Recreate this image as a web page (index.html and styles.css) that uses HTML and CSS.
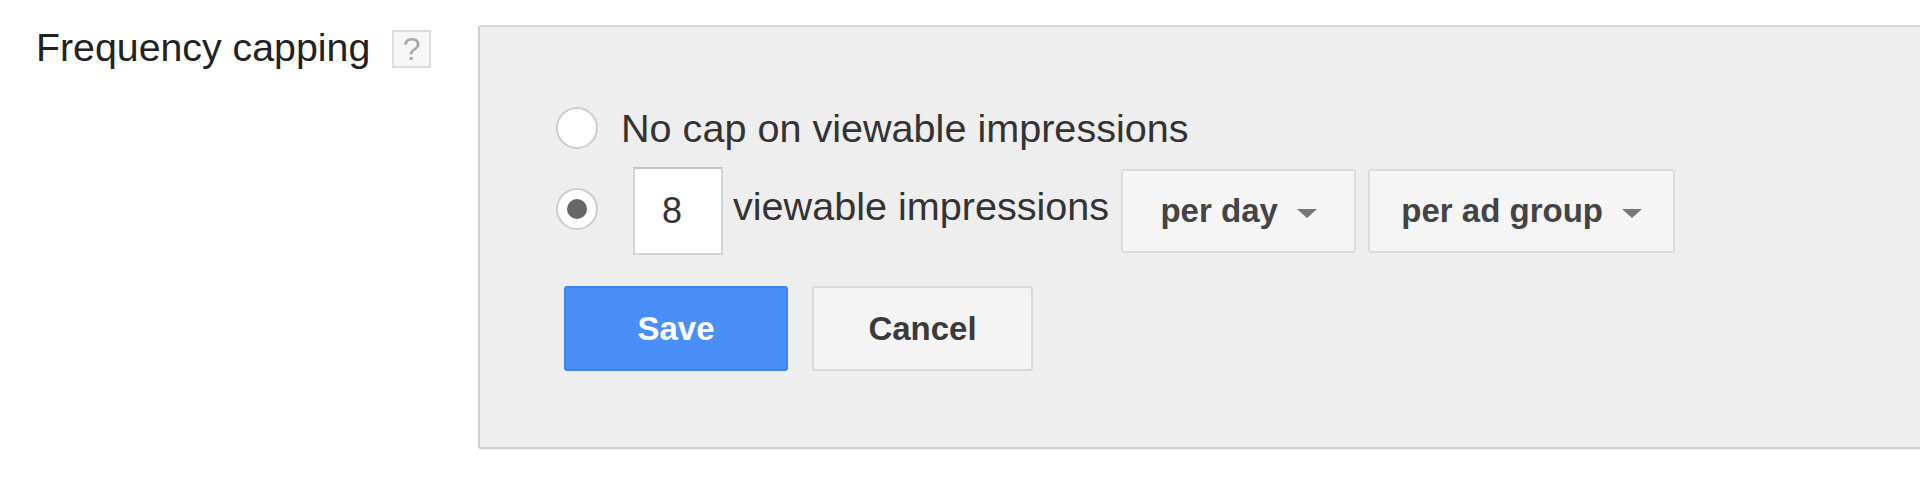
FILE: index.html
```html
<!DOCTYPE html>
<html lang="en">
<head>
<meta charset="utf-8">
<title>Frequency capping</title>
<link rel="stylesheet" href="styles.css">
</head>
<body>
<div class="setting">
  <div class="setting-label">
    <span class="label-text">Frequency capping</span>
    <span class="help">?</span>
  </div>
  <div class="panel">
    <div class="option">
      <span class="radio"></span>
      <span class="option-text">No cap on viewable impressions</span>
    </div>
    <div class="option option-cap">
      <span class="radio radio-checked"><span class="radio-dot"></span></span>
      <span class="num-input">8</span>
      <span class="option-text option-text-raised">viewable impressions</span>
      <span class="dropdown dropdown-day">per day<span class="caret"></span></span>
      <span class="dropdown dropdown-group">per ad group<span class="caret"></span></span>
    </div>
    <div class="actions">
      <span class="btn btn-primary">Save</span>
      <span class="btn btn-default">Cancel</span>
    </div>
  </div>
</div>
</body>
</html>
```

FILE: styles.css
```css
html, body {
  margin: 0;
  padding: 0;
  background: #ffffff;
  overflow: hidden;
}

body {
  font-family: "Liberation Sans", Arial, sans-serif;
  color: #222222;
  height: 495px;
}

.setting {
  display: flex;
  align-items: flex-start;
  padding-top: 25px;
}

.setting-label {
  box-sizing: border-box;
  width: 478px;
  flex-shrink: 0;
  padding-left: 36px;
  display: flex;
  align-items: center;
  font-size: 39.3px;
  line-height: 45px;
  color: #222222;
}

.help {
  box-sizing: border-box;
  width: 39px;
  height: 38px;
  margin-left: 22px;
  margin-top: 3px;
  border: 2px solid #dddddd;
  background: #f6f6f6;
  color: #a8a8a8;
  font-size: 32px;
  font-weight: normal;
  line-height: 34px;
  text-align: center;
}

.panel {
  flex: 1;
  margin-right: -20px;
  height: 424px;
  box-sizing: border-box;
  background: #eeeeee;
  border: 2px solid #cfcfcf;
  border-top-color: #d6d6d6;
  border-radius: 3px 0 0 3px;
  box-shadow: 0 1px 1px rgba(0, 0, 0, 0.06);
  padding: 79px 0 0 76px;
}

.option {
  display: flex;
  align-items: center;
  height: 44px;
}

.option-cap {
  height: 88px;
  margin-top: 17px;
}

.radio {
  box-sizing: border-box;
  width: 42px;
  height: 42px;
  flex-shrink: 0;
  border-radius: 50%;
  border: 2px solid #cdcdcd;
  background: #ffffff;
  display: flex;
  align-items: center;
  justify-content: center;
}

.radio-checked {
  margin-top: -4px;
}

.radio-dot {
  width: 20px;
  height: 20px;
  border-radius: 50%;
  background: #666666;
}

.option-text {
  font-size: 39.6px;
  color: #333333;
  margin-left: 23px;
  white-space: nowrap;
}

.option-text-raised {
  margin-left: 10px;
  margin-bottom: 10px;
}

.num-input {
  box-sizing: border-box;
  width: 90px;
  height: 88px;
  margin-left: 35px;
  padding-left: 27px;
  background: #ffffff;
  border: 2px solid #d4d4d4;
  border-top-color: #c4c4c4;
  font-size: 36px;
  line-height: 84px;
  text-align: left;
  color: #333333;
}

.dropdown {
  box-sizing: border-box;
  height: 84px;
  margin-left: 12px;
  display: flex;
  align-items: center;
  justify-content: center;
  background: #f5f5f5;
  border: 2px solid #dcdcdc;
  border-radius: 3px;
  font-size: 33px;
  font-weight: bold;
  color: #444444;
  white-space: nowrap;
}

.dropdown-day {
  width: 235px;
}

.dropdown-group {
  width: 307px;
  margin-left: 12px;
}

.caret {
  width: 0;
  height: 0;
  margin-left: 19px;
  margin-top: 4px;
  border-left: 10px solid transparent;
  border-right: 10px solid transparent;
  border-top: 9px solid #777777;
}

.actions {
  display: flex;
  gap: 24px;
  margin-top: 31px;
  margin-left: 8px;
}

.btn {
  box-sizing: border-box;
  height: 85px;
  display: flex;
  align-items: center;
  justify-content: center;
  border-radius: 3px;
  font-size: 33px;
  font-weight: bold;
}

.btn-primary {
  width: 224px;
  background: #4a8ef8;
  border: 2px solid #3f83ee;
  color: #ffffff;
}

.btn-default {
  width: 221px;
  background: #f4f4f4;
  border: 2px solid #dadada;
  color: #3a3a3a;
}
```
